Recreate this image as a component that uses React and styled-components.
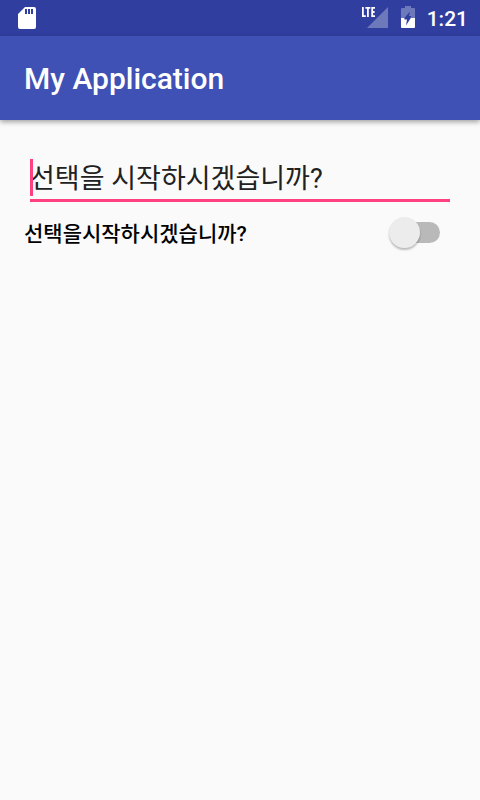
import React from "react";
import styled, { createGlobalStyle } from "styled-components";

const GlobalStyle = createGlobalStyle`
  *, *::before, *::after { box-sizing: border-box; }
  body {
    margin: 0;
    background: #fafafa;
    font-family: Roboto, "Noto Sans CJK KR", sans-serif;
  }
`;

const Screen = styled.div`
  min-height: 100vh;
  background: #fafafa;
`;

const StatusBar = styled.div`
  display: flex;
  align-items: center;
  justify-content: space-between;
  height: 36px;
  padding: 0 12px 0 18px;
  background: #303f9f;
  color: #fff;
`;

const StatusIcons = styled.div`
  display: flex;
  align-items: center;
`;

const StatusIcon = styled.svg`
  display: block;
  flex: none;
  margin-right: ${({ $gap }) => $gap || 0}px;
`;

const Clock = styled.time`
  padding-top: 2px;
  font-size: 21px;
  font-weight: 500;
  line-height: 34px;
`;

const AppBar = styled.header`
  position: relative;
  display: flex;
  align-items: center;
  height: 84px;
  padding: 2px 24px 0;
  background: #3f51b5;
  box-shadow: 0 2px 5px rgba(0, 0, 0, 0.36);
`;

const Title = styled.h1`
  margin: 0;
  color: #fff;
  font-size: 30px;
  font-weight: 500;
  line-height: 36px;
`;

const Content = styled.main`
  display: flex;
  flex-direction: column;
  padding: 38px 24px 24px;
`;

const Field = styled.div`
  position: relative;
  margin: 0 6px;
  border-bottom: 3px solid #ff4081;
`;

const TextInput = styled.input`
  display: block;
  width: 100%;
  height: 41px;
  padding: 0 0 4px;
  border: 0;
  outline: 0;
  background: transparent;
  color: #212121;
  caret-color: #ff4081;
  font-family: inherit;
  font-size: 27px;
  line-height: 36px;
`;

const Caret = styled.span`
  position: absolute;
  top: 1px;
  left: 0;
  width: 3px;
  height: 37px;
  background: #ff4081;
  pointer-events: none;
`;

const SwitchRow = styled.label`
  display: flex;
  align-items: center;
  justify-content: space-between;
  height: 40px;
  margin-top: 10px;
  padding-right: 16px;
  color: #000;
  font-size: 21px;
  font-weight: 500;
  line-height: 30px;
`;

const SwitchText = styled.span`
  padding-top: 4px;
`;

const Switch = styled.input`
  appearance: none;
  position: relative;
  flex: none;
  width: 51px;
  height: 31px;
  margin: 0;
  cursor: pointer;

  &::before {
    content: "";
    position: absolute;
    inset: 5px 0 5px 8px;
    border-radius: 11px;
    background: #b9b9b9;
  }

  &::after {
    content: "";
    position: absolute;
    top: 0;
    left: 0;
    width: 31px;
    height: 31px;
    border-radius: 50%;
    background: #ececec;
    box-shadow: 0 2px 2px rgba(0, 0, 0, 0.25);
  }

  &:checked::before { background: #ff9fc0; }
  &:checked::after { left: 20px; background: #ff4081; }
`;

function SdCardIcon() {
  return (
    <StatusIcon width="18" height="22" viewBox="0 0 18 22" aria-hidden="true">
      <path
        fill="#fff"
        fillRule="evenodd"
        d="M7 0H16Q18 0 18 2V20Q18 22 16 22H2Q0 22 0 20V7ZM7 2V7H9V2ZM10 2V7H12V2ZM13 2V7H15V2Z"
      />
    </StatusIcon>
  );
}

function SignalIcon() {
  return (
    <StatusIcon width="27" height="22" viewBox="0 0 27 22" $gap={13} role="img" aria-label="LTE">
      <path fill="#fff" fillOpacity="0.3" d="M27 0V21H6Z" />
      <g fill="none" stroke="#fff" strokeWidth="1.8">
        <path d="M1.9 0V9.1H4.8" />
        <path d="M4.4 0.9H9.4M6.9 0.9V10" />
        <path d="M14 0.9H11.2V9.1H14M11.2 5H13.6" />
      </g>
    </StatusIcon>
  );
}

function BatteryIcon() {
  return (
    <StatusIcon width="14" height="24" viewBox="0 -1 14 24" $gap={12} aria-hidden="true">
      <path
        fill="#fff"
        fillOpacity="0.3"
        fillRule="evenodd"
        d="M4 -1H10V1H13Q14 1 14 2V11H0V2Q0 1 1 1H4ZM9 4.5L3.4 11H9.2L10.6 9H8Z"
      />
      <path fill="#fff" d="M0 11H3.4V12.4H6L5 18.5L9.8 11H14V20Q14 21 13 21H1Q0 21 0 20Z" />
    </StatusIcon>
  );
}

export default function App() {
  return (
    <Screen>
      <GlobalStyle />
      <StatusBar>
        <SdCardIcon />
        <StatusIcons>
          <SignalIcon />
          <BatteryIcon />
          <Clock>1:21</Clock>
        </StatusIcons>
      </StatusBar>
      <AppBar>
        <Title>My Application</Title>
      </AppBar>
      <Content>
        <Field>
          <TextInput
            type="text"
            aria-label="선택"
            defaultValue="선택을 시작하시겠습니까?"
          />
          <Caret />
        </Field>
        <SwitchRow>
          <SwitchText>선택을시작하시겠습니까?</SwitchText>
          <Switch type="checkbox" role="switch" />
        </SwitchRow>
      </Content>
    </Screen>
  );
}
